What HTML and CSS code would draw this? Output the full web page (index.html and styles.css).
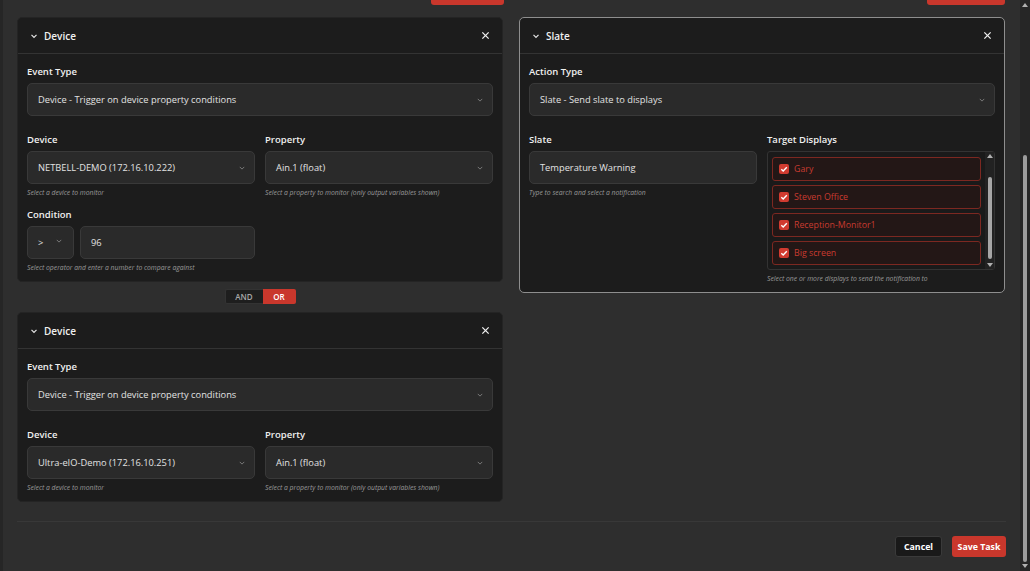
FILE: index.html
```html
<!DOCTYPE html>
<html lang="en">
<head>
  <meta charset="UTF-8">
  <title>Edit Task</title>
  <link rel="stylesheet" href="styles.css">
</head>
<body>
  <div class="window">
    <main class="modal">
      <div class="top-actions">
        <div class="action-slot"><span class="add-btn"></span></div>
        <div class="action-slot"><span class="add-btn wide"></span></div>
      </div>

      <div class="columns">
        <!-- triggers -->
        <section class="column">
          <div class="card">
            <div class="card-header">
              <svg class="chevron" viewBox="0 0 8 8"><path d="M1.5 2.8 L4 5.3 L6.5 2.8"/></svg>
              <span class="card-title">Device</span>
              <svg class="close" viewBox="0 0 10 10"><path d="M1.5 1.5 L8.5 8.5 M8.5 1.5 L1.5 8.5"/></svg>
            </div>
            <div class="card-body">
              <div class="field wide">
                <label>Event Type</label>
                <div class="select">Device - Trigger on device property conditions<svg class="caret" viewBox="0 0 8 5"><path d="M1 1 L4 4 L7 1"/></svg></div>
              </div>
              <div class="field-row">
                <div class="field">
                  <label>Device</label>
                  <div class="select">NETBELL-DEMO (172.16.10.222)<svg class="caret" viewBox="0 0 8 5"><path d="M1 1 L4 4 L7 1"/></svg></div>
                  <div class="help">Select a device to monitor</div>
                </div>
                <div class="field">
                  <label>Property</label>
                  <div class="select">Ain.1 (float)<svg class="caret" viewBox="0 0 8 5"><path d="M1 1 L4 4 L7 1"/></svg></div>
                  <div class="help">Select a property to monitor (only output variables shown)</div>
                </div>
              </div>
              <div class="field-row">
                <div class="field last">
                  <label>Condition</label>
                  <div class="condition">
                    <div class="select operator">&gt;<svg class="caret" viewBox="0 0 8 5"><path d="M1 1 L4 4 L7 1"/></svg></div>
                    <div class="select value">96</div>
                  </div>
                  <div class="help">Select operator and enter a number to compare against</div>
                </div>
              </div>
            </div>
          </div>

          <div class="logic-toggle">
            <span class="logic">AND</span>
            <span class="logic active">OR</span>
          </div>

          <div class="card">
            <div class="card-header">
              <svg class="chevron" viewBox="0 0 8 8"><path d="M1.5 2.8 L4 5.3 L6.5 2.8"/></svg>
              <span class="card-title">Device</span>
              <svg class="close" viewBox="0 0 10 10"><path d="M1.5 1.5 L8.5 8.5 M8.5 1.5 L1.5 8.5"/></svg>
            </div>
            <div class="card-body">
              <div class="field wide">
                <label>Event Type</label>
                <div class="select">Device - Trigger on device property conditions<svg class="caret" viewBox="0 0 8 5"><path d="M1 1 L4 4 L7 1"/></svg></div>
              </div>
              <div class="field-row">
                <div class="field last">
                  <label>Device</label>
                  <div class="select">Ultra-eIO-Demo (172.16.10.251)<svg class="caret" viewBox="0 0 8 5"><path d="M1 1 L4 4 L7 1"/></svg></div>
                  <div class="help">Select a device to monitor</div>
                </div>
                <div class="field last">
                  <label>Property</label>
                  <div class="select">Ain.1 (float)<svg class="caret" viewBox="0 0 8 5"><path d="M1 1 L4 4 L7 1"/></svg></div>
                  <div class="help">Select a property to monitor (only output variables shown)</div>
                </div>
              </div>
            </div>
          </div>
        </section>

        <!-- actions -->
        <section class="column">
          <div class="card selected">
            <div class="card-header">
              <svg class="chevron" viewBox="0 0 8 8"><path d="M1.5 2.8 L4 5.3 L6.5 2.8"/></svg>
              <span class="card-title">Slate</span>
              <svg class="close" viewBox="0 0 10 10"><path d="M1.5 1.5 L8.5 8.5 M8.5 1.5 L1.5 8.5"/></svg>
            </div>
            <div class="card-body">
              <div class="field wide">
                <label>Action Type</label>
                <div class="select">Slate - Send slate to displays<svg class="caret" viewBox="0 0 8 5"><path d="M1 1 L4 4 L7 1"/></svg></div>
              </div>
              <div class="field-row">
                <div class="field last">
                  <label>Slate</label>
                  <div class="select">Temperature Warning</div>
                  <div class="help">Type to search and select a notification</div>
                </div>
                <div class="field last">
                  <label>Target Displays</label>
                  <div class="display-list">
                    <div class="display-items">
                      <div class="display-item"><span class="check"><svg viewBox="0 0 10 10"><path d="M2.3 5.2 L4.2 7 L7.8 3.2"/></svg></span>Gary</div>
                      <div class="display-item"><span class="check"><svg viewBox="0 0 10 10"><path d="M2.3 5.2 L4.2 7 L7.8 3.2"/></svg></span>Steven Office</div>
                      <div class="display-item"><span class="check"><svg viewBox="0 0 10 10"><path d="M2.3 5.2 L4.2 7 L7.8 3.2"/></svg></span>Reception-Monitor1</div>
                      <div class="display-item"><span class="check"><svg viewBox="0 0 10 10"><path d="M2.3 5.2 L4.2 7 L7.8 3.2"/></svg></span>Big screen</div>
                    </div>
                    <div class="mini-scroll">
                      <span class="arrow up"></span>
                      <span class="mini-track"><span class="mini-thumb"></span></span>
                      <span class="arrow down"></span>
                    </div>
                  </div>
                  <div class="help">Select one or more displays to send the notification to</div>
                </div>
              </div>
            </div>
          </div>
        </section>
      </div>

      <hr class="divider">

      <footer class="footer">
        <button class="btn cancel">Cancel</button>
        <button class="btn save">Save Task</button>
      </footer>
    </main>

    <div class="page-scroll">
      <span class="arrow up"></span>
      <span class="page-track"><span class="page-thumb"></span></span>
      <span class="arrow down"></span>
    </div>
  </div>
</body>
</html>
```

FILE: styles.css
```css
* {
  box-sizing: border-box;
}

body {
  margin: 0;
  background-color: #2e2e2e;
  font-family: "Open Sans", "Noto Sans", sans-serif;
  color: #e6e6e6;
  overflow: hidden;
}

.window {
  display: flex;
  width: 1030px;
  height: 571px;
}

.modal {
  width: 1020px;
  height: 571px;
  border-left: 3px solid #262626;
  padding: 0 15px 0 14px;
}

.top-actions,
.columns {
  display: grid;
  grid-template-columns: 486px 486px;
  column-gap: 16px;
}

.top-actions {
  height: 5px;
  margin-bottom: 12px;
}

.action-slot {
  display: flex;
  justify-content: flex-end;
}

.add-btn {
  display: block;
  width: 73px;
  height: 5px;
  margin-right: -1px;
  background-color: #c9372c;
  border-radius: 0 0 3px 3px;
}

.add-btn.wide {
  width: 78px;
  margin-right: 0;
}

.columns {
  align-items: start;
}

.card {
  background-color: #1c1c1c;
  border: 1px solid #242424;
  border-radius: 5px;
}

.card.selected {
  border-color: #8e8e8e;
}

.card-header {
  display: flex;
  align-items: center;
  height: 36px;
  padding: 0 12px 0 12px;
  border-bottom: 1px solid #333;
}

.chevron {
  width: 8px;
  height: 8px;
  margin-right: 6px;
  fill: none;
  stroke: #e6e6e6;
  stroke-width: 1.2;
}

.card-title {
  flex: 1;
  font-size: 10px;
  font-weight: 600;
  color: #f0f0f0;
}

.close {
  width: 9px;
  height: 9px;
  fill: none;
  stroke: #f0f0f0;
  stroke-width: 1.4;
}

.card-body {
  padding: 11px 9px 9px;
}

.field {
  margin-bottom: 11px;
}

.field.wide {
  margin-bottom: 17px;
}

.field.last {
  margin-bottom: 0;
}

.field-row {
  display: grid;
  grid-template-columns: 1fr 1fr;
  column-gap: 10px;
}

label {
  display: block;
  height: 13px;
  margin-bottom: 5px;
  font-size: 9.5px;
  font-weight: 600;
  line-height: 13px;
  color: #f0f0f0;
}

.select {
  position: relative;
  display: flex;
  align-items: center;
  height: 33px;
  padding: 0 10px;
  background-color: #2a2a2a;
  border: 1px solid #393939;
  border-radius: 5px;
  font-size: 9.3px;
  color: #e2e2e2;
}

.caret {
  position: absolute;
  right: 9px;
  top: 14px;
  width: 6px;
  height: 4px;
  fill: none;
  stroke: #8a8a8a;
  stroke-width: 1.1;
}

.condition {
  display: flex;
  gap: 6px;
}

.select.operator {
  width: 47px;
}

.select.operator .caret {
  right: 11px;
  top: 12px;
}

.select.value {
  flex: 1;
}

.help {
  margin-top: 4px;
  font-size: 6.8px;
  font-style: italic;
  line-height: 9px;
  color: #9a9a9a;
}

.logic-toggle {
  display: flex;
  justify-content: center;
  margin: 7px 0 8px;
}

.logic {
  display: flex;
  align-items: center;
  justify-content: center;
  height: 15px;
  font-size: 8px;
  font-weight: 600;
}

.logic:first-child {
  width: 38px;
  background-color: #1e1e1e;
  border: 1px solid #333;
  border-right: none;
  border-radius: 2px 0 0 2px;
  color: #a8a8a8;
}

.logic.active {
  width: 33px;
  background-color: #c9372c;
  border-radius: 0 2px 2px 0;
  color: #fff;
}

.display-list {
  display: flex;
  height: 119px;
  background-color: #1a1a1a;
  border: 1px solid #333;
  border-radius: 3px;
}

.display-items {
  flex: 1;
  display: flex;
  flex-direction: column;
  gap: 4px;
  padding: 5px 4px 0 4px;
}

.display-item {
  display: flex;
  align-items: center;
  height: 24px;
  padding-left: 6px;
  background-color: #231716;
  border: 1px solid #7c2821;
  border-radius: 3px;
  font-size: 8.8px;
  color: #c93b30;
}

.check {
  display: flex;
  width: 10px;
  height: 10px;
  margin-right: 5px;
  background-color: #d13b30;
  border-radius: 2px;
}

.check svg {
  width: 10px;
  height: 10px;
  fill: none;
  stroke: #fff;
  stroke-width: 1.4;
}

.mini-scroll,
.page-scroll {
  display: flex;
  flex-direction: column;
  align-items: center;
}

.mini-scroll {
  width: 9px;
  padding: 2px 0;
  background-color: #222;
}

.mini-track {
  flex: 1;
  display: flex;
  flex-direction: column;
  padding: 19px 0 4px;
}

.mini-thumb {
  flex: 1;
  width: 4px;
  background-color: #a6a6a6;
  border-radius: 2px;
}

.arrow {
  width: 0;
  height: 0;
  border-left: 3px solid transparent;
  border-right: 3px solid transparent;
}

.arrow.up {
  border-bottom: 4px solid #b0b0b0;
}

.arrow.down {
  border-top: 4px solid #b0b0b0;
}

.divider {
  margin: 19px 0 0;
  width: 989px;
  border: none;
  border-top: 1px solid #383838;
}

.footer {
  display: flex;
  justify-content: flex-end;
  gap: 10px;
  width: 989px;
  padding-top: 14px;
}

.btn {
  height: 21px;
  padding: 0;
  border-radius: 3px;
  font-family: "Open Sans", "Noto Sans", sans-serif;
  font-size: 8.8px;
  font-weight: 700;
  color: #fff;
  cursor: pointer;
}

.btn.cancel {
  width: 47px;
  background-color: #191919;
  border: 1px solid #3a3a3a;
}

.btn.save {
  width: 54px;
  background-color: #c9372c;
  border: none;
}

.page-scroll {
  width: 10px;
  padding: 3px 0 3px;
  background-color: #262626;
}

.page-track {
  flex: 1;
  display: flex;
  flex-direction: column;
  padding: 148px 0 2px;
}

.page-thumb {
  flex: 1;
  width: 4px;
  background-color: #9c9c9c;
  border-radius: 2px;
}
```
